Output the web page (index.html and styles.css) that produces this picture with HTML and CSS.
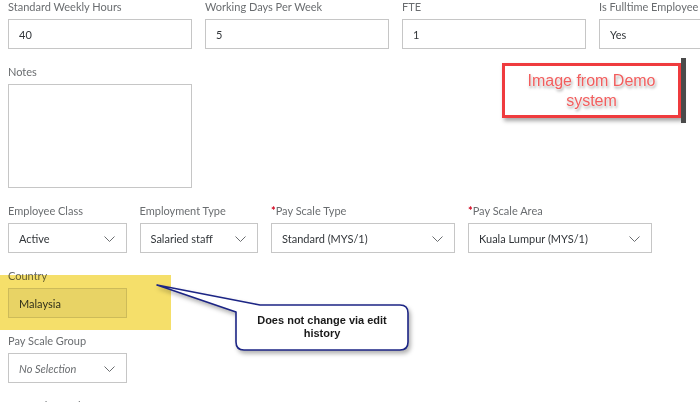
FILE: index.html
```html
<!DOCTYPE html>
<html lang="en">
<head>
  <meta charset="UTF-8" />
  <title>Job Information</title>
  <link rel="stylesheet" href="styles.css">
</head>
<body>
  <div class="form">

    <div class="row">
      <div class="field">
        <label>Standard Weekly Hours</label>
        <div class="input">40</div>
      </div>
      <div class="field">
        <label>Working Days Per Week</label>
        <div class="input">5</div>
      </div>
      <div class="field">
        <label>FTE</label>
        <div class="input">1</div>
      </div>
      <div class="field">
        <label>Is Fulltime Employee</label>
        <div class="input select">Yes
          <svg class="chev" width="11" height="6" viewBox="0 0 11 6"><polyline points="0.5,0.5 5.5,5.5 10.5,0.5" /></svg>
        </div>
      </div>
    </div>

    <div class="row">
      <div class="field">
        <label>Notes</label>
        <div class="input textarea"></div>
      </div>
    </div>

    <div class="row">
      <div class="field small">
        <label>Employee Class</label>
        <div class="input select">Active
          <svg class="chev" width="11" height="6" viewBox="0 0 11 6"><polyline points="0.5,0.5 5.5,5.5 10.5,0.5" /></svg>
        </div>
      </div>
      <div class="field small">
        <label>Employment Type</label>
        <div class="input select">Salaried staff
          <svg class="chev" width="11" height="6" viewBox="0 0 11 6"><polyline points="0.5,0.5 5.5,5.5 10.5,0.5" /></svg>
        </div>
      </div>
      <div class="field">
        <label><span class="req">*</span>Pay Scale Type</label>
        <div class="input select">Standard (MYS/1)
          <svg class="chev" width="11" height="6" viewBox="0 0 11 6"><polyline points="0.5,0.5 5.5,5.5 10.5,0.5" /></svg>
        </div>
      </div>
      <div class="field">
        <label><span class="req">*</span>Pay Scale Area</label>
        <div class="input select">Kuala Lumpur (MYS/1)
          <svg class="chev" width="11" height="6" viewBox="0 0 11 6"><polyline points="0.5,0.5 5.5,5.5 10.5,0.5" /></svg>
        </div>
      </div>
    </div>

    <div class="row">
      <div class="field small">
        <label>Country</label>
        <div class="input readonly">Malaysia</div>
      </div>
    </div>

    <div class="row">
      <div class="field small">
        <label>Pay Scale Group</label>
        <div class="input select empty">No Selection
          <svg class="chev" width="11" height="6" viewBox="0 0 11 6"><polyline points="0.5,0.5 5.5,5.5 10.5,0.5" /></svg>
        </div>
      </div>
    </div>

    <div class="row">
      <div class="field small">
        <label>Pay Scale Level</label>
      </div>
    </div>
  </div>

  <!-- annotations drawn over the screenshot -->
  <div class="highlight"></div>

  <div class="demo-note">
    <span>Image from Demo<br>system</span>
  </div>
  <div class="demo-bar"></div>

  <div class="callout">
    <svg width="700" height="402" viewBox="0 0 700 402">
      <path d="M 260 305 L 400 305 Q 408 305 408 313 L 408 342 Q 408 350 400 350 L 244 350 Q 236 350 236 342 L 236 312 L 157 285 Z" />
    </svg>
    <div class="callout-text">Does not change via edit<br>history</div>
  </div>
</body>
</html>
```

FILE: styles.css
```css
* {
  margin: 0;
  padding: 0;
  box-sizing: border-box;
}

body {
  background-color: white;
  font-family: Lato, 'Liberation Sans', sans-serif;
  width: 700px;
  height: 402px;
  overflow: hidden;
  position: relative;
}

.form {
  padding: 0 8px;
}

.row {
  display: flex;
  gap: 13px;
  margin-bottom: 16px;
}

.field {
  width: 184px;
  flex-shrink: 0;
}

.field.small {
  width: 118.5px;
}

.field label {
  display: block;
  height: 14px;
  line-height: 14px;
  margin-bottom: 5px;
  font-size: 11px;
  color: #6a6d70;
  white-space: nowrap;
}

.req {
  color: #d0011b;
  font-weight: bold;
}

.input {
  position: relative;
  height: 30px;
  border: 1px solid #c6c6c6;
  padding: 0 10px;
  display: flex;
  align-items: center;
  font-size: 11px;
  color: #32363a;
  background-color: white;
}

.input.textarea {
  height: 104px;
}

.input.readonly {
  background-color: #f2f2f2;
  border-color: #d6d6d6;
}

.input.empty {
  font-style: italic;
  color: #6a6d70;
}

.chev {
  position: absolute;
  right: 11px;
  top: 12px;
}

.chev polyline {
  fill: none;
  stroke: #6a6d70;
  stroke-width: 1;
}

.highlight {
  position: absolute;
  left: 0;
  top: 275px;
  width: 171px;
  height: 55px;
  background-color: #f5df6a;
  mix-blend-mode: multiply;
}

.demo-note {
  position: absolute;
  left: 502px;
  top: 63px;
  width: 179px;
  height: 55px;
  border: 3px solid #ef3b3e;
  background-color: white;
  box-shadow: 2px 3px 4px rgba(0, 0, 0, 0.35);
  display: flex;
  align-items: center;
  justify-content: center;
  text-align: center;
}

.demo-note span {
  font-family: 'Liberation Sans', Arial, sans-serif;
  font-size: 16px;
  line-height: 20px;
  color: #f25d5d;
  text-shadow: 0 0 2px white, 0 0 3px white, 1px 2px 3px rgba(0, 0, 0, 0.45);
}

.demo-bar {
  position: absolute;
  left: 681px;
  top: 58px;
  width: 5px;
  height: 65px;
  background-color: #4a4a4a;
}

.callout {
  position: absolute;
  left: 0;
  top: 0;
  width: 700px;
  height: 402px;
  pointer-events: none;
}

.callout svg {
  position: absolute;
  left: 0;
  top: 0;
  filter: drop-shadow(2px 3px 2px rgba(0, 0, 0, 0.3));
}

.callout path {
  fill: white;
  stroke: #1c2585;
  stroke-width: 1.6;
  stroke-linejoin: round;
}

.callout-text {
  position: absolute;
  left: 236px;
  top: 314px;
  width: 172px;
  text-align: center;
  font-family: 'Liberation Sans', Arial, sans-serif;
  font-size: 11px;
  line-height: 13px;
  font-weight: bold;
  color: #1a1a1a;
}
```
